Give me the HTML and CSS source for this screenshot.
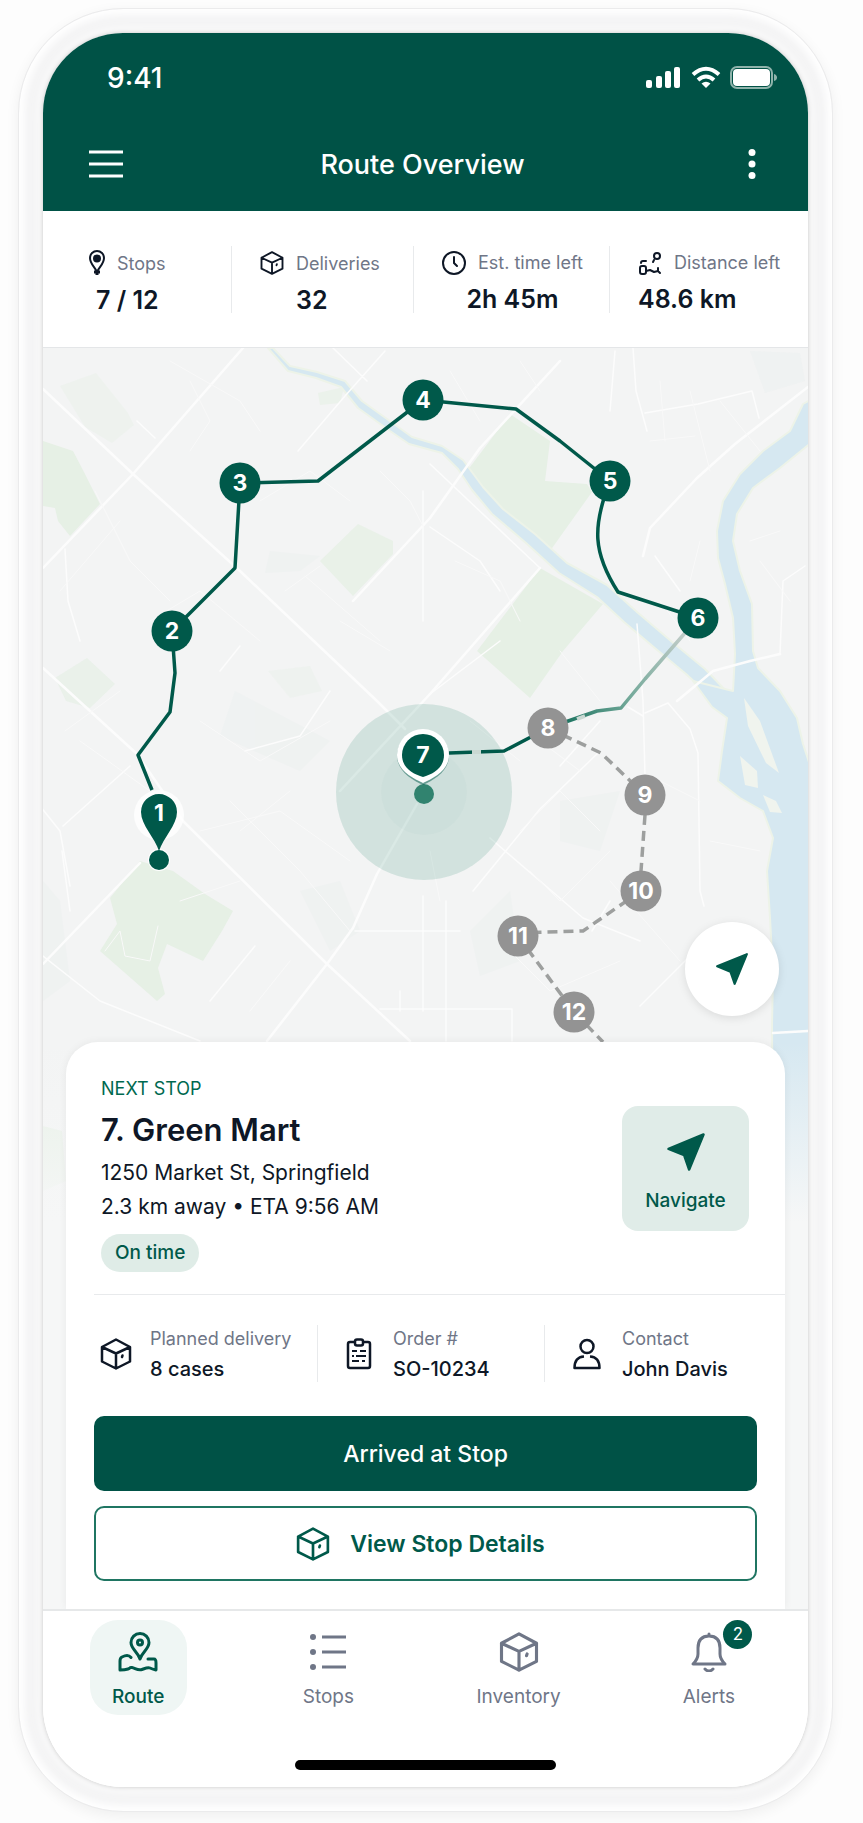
FILE: index.html
```html
<!DOCTYPE html>
<html lang="en">
<head>
    <meta charset="UTF-8">
    <meta name="viewport" content="width=device-width, initial-scale=1.0">
    <title>Route Overview</title>
    <link rel="stylesheet" href="styles.css">
</head>
<body>
    <!-- Shared icons -->
    <svg class="sprite" aria-hidden="true">
        <symbol id="icon-box" viewBox="0 0 32 32">
            <path d="M16 1.500 30 9V23.500L16 30.500 2 23.500V9ZM2 9 16 15.500 30 9M16 15.500V30.500"/>
            <path d="M22 19 22.500 17.500"/>
        </symbol>
        <symbol id="icon-arrow" viewBox="0 0 32 32">
            <path d="M30 2 18.500 30 14.500 18.500 2 13.500Z"/>
        </symbol>
    </svg>

    <div class="phone">
        <div class="screen">
            <header class="header">
                <div class="status-bar">
                    <span class="time">9:41</span>
                    <div class="status-icons">
                        <svg width="36" height="24" viewBox="0 0 36 24" fill="#fff">
                            <rect x="0" y="14" width="6" height="8" rx="2"/>
                            <rect x="10" y="10" width="6" height="12" rx="2"/>
                            <rect x="19" y="5" width="6" height="17" rx="2"/>
                            <rect x="28" y="1" width="6" height="21" rx="2"/>
                        </svg>
                        <svg width="30" height="24" viewBox="0 0 30 24" fill="none" stroke="#fff" stroke-width="4">
                            <path d="M2 8.500Q15-3 28 8.500M7 14Q15 7 23 14"/>
                            <path d="M15 22 10.500 17.500Q15 14 19.500 17.500Z" fill="#fff" stroke="none"/>
                        </svg>
                        <svg width="48" height="24" viewBox="0 0 48 24">
                            <rect x="1" y="1" width="41" height="21" rx="6" fill="none" stroke="#8fb3ab" stroke-width="2"/>
                            <rect x="3" y="3" width="37" height="17" rx="4" fill="#fff"/>
                            <path d="M44 8Q47 9 47 11.500T44 15Z" fill="#8fb3ab"/>
                        </svg>
                    </div>
                </div>
                <div class="app-bar">
                    <button class="icon-btn" aria-label="Menu">
                        <svg width="34" height="30" viewBox="0 0 34 30" stroke="#fff" stroke-width="3">
                            <path d="M0 3H34M0 15H34M0 27H34"/>
                        </svg>
                    </button>
                    <h1>Route Overview</h1>
                    <button class="icon-btn" aria-label="More options">
                        <svg width="8" height="30" viewBox="0 0 8 30" fill="#fff">
                            <circle cx="4" cy="3.500" r="3.500"/>
                            <circle cx="4" cy="15" r="3.500"/>
                            <circle cx="4" cy="26.500" r="3.500"/>
                        </svg>
                    </button>
                </div>
            </header>

            <section class="stats">
                <div class="stat">
                    <div class="stat-body center">
                        <div class="stat-label">
                            <svg width="16" height="26" viewBox="0 0 16 26" fill="none" stroke="#0e1726" stroke-width="2">
                                <path d="M8 22C6 17 1 14 1 8a7 7 0 0 1 14 0c0 6-5 9-7 14Z"/>
                                <circle cx="8" cy="8.500" r="3" fill="#0e1726"/>
                                <path d="M5 22h6M8 22v3" stroke-width="3"/>
                            </svg>
                            <span>Stops</span>
                        </div>
                        <strong>7 / 12</strong>
                    </div>
                </div>
                <div class="stat">
                    <div class="stat-body indent">
                        <div class="stat-label">
                            <svg width="24" height="26" class="line dark"><use href="#icon-box"/></svg>
                            <span>Deliveries</span>
                        </div>
                        <strong>32</strong>
                    </div>
                </div>
                <div class="stat">
                    <div class="stat-body center">
                        <div class="stat-label">
                            <svg width="24" height="24" viewBox="0 0 24 24" fill="none" stroke="#0e1726" stroke-width="2" stroke-linecap="round">
                                <circle cx="12" cy="12" r="11"/>
                                <path d="M12 6v6l3 3"/>
                            </svg>
                            <span>Est. time left</span>
                        </div>
                        <strong>2h 45m</strong>
                    </div>
                </div>
                <div class="stat">
                    <div class="stat-body">
                        <div class="stat-label">
                            <svg width="24" height="24" viewBox="0 0 24 24" fill="none" stroke="#0e1726" stroke-width="2" stroke-linecap="round" stroke-linejoin="round">
                                <circle cx="19" cy="5" r="3"/>
                                <path d="M16 9 15 11M3 12q0-2 2-2h3"/>
                                <rect x="2" y="15" width="6" height="8" rx="2"/>
                                <path d="M8 20l4-1 4 2 4-1v-3M20 20l2 2"/>
                            </svg>
                            <span>Distance left</span>
                        </div>
                        <strong>48.6 km</strong>
                    </div>
                </div>
            </section>

            <main class="content">
                <svg class="map" viewBox="43 347 765 1261" preserveAspectRatio="xMidYMin slice" role="img" aria-label="Map of the route">
                    <defs>
                        <linearGradient id="fade" x1="0" y1="0" x2="0" y2="1">
                            <stop offset="0" stop-color="#f6f7f7" stop-opacity="0"/>
                            <stop offset="1" stop-color="#f6f7f7"/>
                        </linearGradient>
                        <linearGradient id="leg" gradientUnits="userSpaceOnUse" x1="686" y1="632" x2="568" y2="722">
                            <stop offset="0" stop-color="#c3cdc9"/>
                            <stop offset="0.600" stop-color="#6fa797"/>
                            <stop offset="1" stop-color="#1f7562"/>
                        </linearGradient>
                    </defs>
                    <rect x="43" y="347" width="765" height="1261" fill="#f3f4f4"/>

                    <!-- Parks -->
                    <g fill="#e6f0e5">
                        <path d="M43 440 73 450 85 473 100 503 70 535 58 520 55 507 43 505Z"/>
                        <path d="M55 677 87 657 115 683 90 707 66 700Z" opacity=".7"/>
                        <path d="M60 385 96 372 128 412 134 424 112 442 85 426Z" opacity=".4"/>
                        <path d="M320 560 358 523 393 540V553L353 595Z" opacity=".8"/>
                        <path d="M510 413 550 440 545 480 587 483 592 491 550 550 493 510 467 470Z"/>
                        <path d="M540 567 603 603 563 650 530 697 477 650Z"/>
                        <path d="M140 860 173 870 205 893 233 910 222 930 203 960 167 943 158 967 165 993 157 1000 100 950 117 923 110 897Z"/>
                        <path d="M268 670 310 665 322 690 290 697Z" opacity=".3"/>
                        <path d="M318 392 344 386 340 402 320 404Z" opacity=".6"/>
                        <path d="M43 1125 62 1130 66 1180 43 1190Z"/>
                    </g>
                    <g fill="#e9efee" opacity=".35">
                        <path d="M235 690 330 740 300 770 220 735Z"/>
                        <path d="M300 890 340 880 360 930 330 950Z"/>
                        <path d="M470 930 510 890 520 960 480 975Z"/>
                        <path d="M560 800 620 790 600 850 560 840Z"/>
                        <path d="M43 880 60 900 70 980 43 1000Z"/>
                        <path d="M270 550 320 555 300 570 265 572Z"/>
                        <path d="M750 350 800 352 805 380 765 392Z"/>
                    </g>

                    <!-- Rivers -->
                    <g stroke="#edf3e8" stroke-width="2" fill="#d6e8f1" stroke-linejoin="round">
                        <path d="M273 347 290 365 317 371 345 380 362 400 394 423 412 436 442 445 463 459 483 486 503 508 535 533 567 562 607 584 637 611 671 640 705 668 730 694 712 697 686 673 656 648 624 621 597 596 559 572 526 542 492 513 472 489 458 468 442 452 409 443 390 430 358 407 341 386 316 377 288 370 268 347Z"/>
                        <path d="M812 398 803 403 790 430 763 450 740 473 723 500 717 530 718 557 725 583 733 617 735 653 733 690 693 680 712 706 727 717 722 750 718 780 740 797 763 810 773 837 767 870 770 917 773 973 772 1023 773 1240H812V770L803 743 797 717 780 690 758 667 753 650 752 603 740 570 733 540 737 513 753 487 780 467 812 441Z"/>
                    </g>
                    <g fill="#f0f4ee">
                        <path d="M744 697 760 720 779 772 766 762 748 725Z"/>
                        <path d="M740 755 757 770 758 787 745 784Z"/>
                        <path d="M763 794 776 800 782 812 770 811Z"/>
                    </g>

                    <!-- Roads -->
                    <g fill="none" stroke="#fcfcfc" stroke-linejoin="round" stroke-linecap="round">
                        <path stroke-width="2.500" d="M43 388 133 473 240 570 377 700 405 728M43 667 137 753 183 820 327 963 410 1040M243 347 133 473 43 567M43 963 140 862M267 1040 327 963 353 927 377 873 417 803M560 360 480 447 430 517 353 600M540 567 430 693 340 790M808 386 735 443 697 477 650 527 643 555M780 653 750 660 713 670 677 700M773 1032 808 1030"/>
                        <path stroke-width="1.500" d="M633 347 636 390 647 430M615 350 610 410M430 463 540 567M430 526 480 560 500 590M637 623 643 700 645 775M643 715 628 706M645 712 668 702 690 728 698 752 700 890 704 905M490 837 583 917 640 940M598 752 540 808 473 890M600 720 560 765M780 653 783 580 805 565M645 412 698 403 752 390 759 417M355 930H460M423 895V1010M400 990V1010M446 900V1040M380 1008H512V1040M65 548 68 600 80 640M62 850 70 910M40 805 60 830 70 885M63 825 130 765M43 955 100 1000 200 1040M210 1000 255 945M137 420 155 437M333 347 367 380M385 350 345 395 298 450M423 490V620M430 693 500 640M330 690 300 735 245 750M240 645 220 670M655 555 680 590M592 930 610 900M640 1005 690 955"/>
                        <path stroke-width="1" stroke="#f9f9f9" d="M170 360 240 400 260 430M190 380 210 420 190 450M95 490 130 560 170 600M120 520 60 590M150 620 200 590 260 640M260 500 310 470 350 500M285 590 320 565M305 575 380 640M380 470 410 500 423 525M340 620 390 650M65 730 120 690M80 740 150 790M200 720 260 760 330 720M230 800 300 870 350 930M200 830 280 810 350 860M180 900 240 880M240 830 290 790M250 1010 290 960M105 950 120 930 125 955 150 960 158 925M440 900 430 850M520 830 560 790 600 830M530 870 560 900 610 850M500 940 550 990 620 960M610 880 680 960M580 770 540 740M660 780 700 800M710 840 760 850M660 380 665 440M690 390 710 470M650 440 695 435M720 400 760 450M660 600 690 640M700 540 690 580M455 560 500 580 520 620M560 650 600 700M450 370 480 420M520 360 540 390M750 540 780 530M760 560 790 600M470 720 520 760"/>
                    </g>

                    <!-- Position halo -->
                    <circle cx="424" cy="791" r="88" fill="#0b7a5e" fill-opacity=".14"/>
                    <circle cx="424" cy="791" r="43" fill="#0b7a5e" fill-opacity=".02"/>

                    <!-- Planned legs -->
                    <g fill="none" stroke="#9d9f9e" stroke-width="3.500" stroke-dasharray="10 6">
                        <path d="M548 727 601 752 645 794M645 814 641 870M641 890 583 930 518 932M518 935 574 1011 603 1041"/>
                    </g>
                    <!-- Driven legs -->
                    <g fill="none" stroke="#00594a" stroke-width="3.500" stroke-linejoin="round">
                        <path d="M152 789 138 754 170 711 175 672 172 630 235 567 240 482 318 480 362 446 423 399 516 408 560 440 610 480C592 526 593 552 618 591L698 617"/>
                        <path stroke="url(#leg)" d="M698 617 645 678 621 707 597 710 548 727"/>
                        <path d="M548 727 504 750 449 752"/>
                    </g>
                    <path d="M472 751h9M577 718l8-3" stroke="#c9d8d2" stroke-width="4"/>

                    <!-- Stops -->
                    <g fill="#00594a">
                        <circle cx="172" cy="630" r="20.500"/>
                        <circle cx="240" cy="482" r="20.500"/>
                        <circle cx="423" cy="399" r="20.500"/>
                        <circle cx="610" cy="480" r="20.500"/>
                        <circle cx="698" cy="617" r="20.500"/>
                    </g>
                    <g fill="#939393">
                        <circle cx="548" cy="727" r="20.500"/>
                        <circle cx="645" cy="794" r="20.500"/>
                        <circle cx="641" cy="890" r="20.500"/>
                        <circle cx="518" cy="935" r="20.500"/>
                        <circle cx="574" cy="1011" r="20.500"/>
                    </g>
                    <circle cx="159" cy="814" r="25" fill="#fff" fill-opacity=".8"/>
                    <circle cx="159" cy="859" r="11" fill="#fff"/>
                    <circle cx="159" cy="859" r="10" fill="#00594a"/>
                    <path d="M159 850C155 837 141 824 141 811a18 18 0 0 1 36 0c0 13-14 26-18 39Z" fill="#00594a"/>
                    <circle cx="424" cy="793" r="10" fill="#31836f"/>
                    <path d="M423 784C412 779 397 770 397 755a26 26 0 0 1 52 0c0 15-15 24-26 29Z" fill="#00594a" fill-opacity=".5"/>
                    <path d="M423 782C412 777 397 769 397 754a26 26 0 0 1 52 0c0 15-15 23-26 28Z" fill="#fff"/>
                    <path d="M423 776C413 773 402 767 402 754a21 21 0 0 1 42 0c0 13-11 19-21 22Z" fill="#00594a"/>

                    <g class="map-numbers">
                        <text x="159" y="820">1</text>
                        <text x="172" y="638">2</text>
                        <text x="240" y="490">3</text>
                        <text x="423" y="407">4</text>
                        <text x="610" y="488">5</text>
                        <text x="698" y="625">6</text>
                        <text x="423" y="762">7</text>
                        <text x="548" y="735">8</text>
                        <text x="645" y="802">9</text>
                        <text x="641" y="898">10</text>
                        <text x="518" y="943">11</text>
                        <text x="574" y="1019">12</text>
                    </g>

                    <rect x="43" y="1041" width="765" height="180" fill="url(#fade)"/>
                    <rect x="43" y="1220" width="765" height="390" fill="#f6f7f7"/>
                </svg>

                <div class="map-area">
                    <button class="locate" aria-label="Centre map on my position">
                        <svg width="34" height="34" class="solid"><use href="#icon-arrow"/></svg>
                    </button>
                </div>

                <section class="card">
                    <div class="next-stop">
                        <div class="stop-info">
                            <span class="eyebrow">NEXT STOP</span>
                            <h2>7. Green Mart</h2>
                            <p>1250 Market St, Springfield</p>
                            <p>2.3 km away • ETA 9:56 AM</p>
                            <span class="pill">On time</span>
                        </div>
                        <button class="navigate">
                            <svg width="40" height="40" class="solid"><use href="#icon-arrow"/></svg>
                            <span>Navigate</span>
                        </button>
                    </div>

                    <div class="details">
                        <div class="detail">
                            <svg width="32" height="32" class="line dark"><use href="#icon-box"/></svg>
                            <div>
                                <span class="detail-label">Planned delivery</span>
                                <span class="detail-value">8 cases</span>
                            </div>
                        </div>
                        <div class="detail">
                            <svg width="26" height="32" viewBox="0 0 26 32" fill="none" stroke="#0e1726" stroke-width="2.500">
                                <rect x="2" y="4" width="22" height="26" rx="2"/>
                                <rect x="9" y="1.500" width="8" height="6" rx="2" fill="#fff"/>
                                <path d="M6 13h5M14 13h6M6 18h2M10 18h10M6 23h7M16 23h3" stroke-width="2"/>
                            </svg>
                            <div>
                                <span class="detail-label">Order #</span>
                                <span class="detail-value">SO-10234</span>
                            </div>
                        </div>
                        <div class="detail">
                            <svg width="28" height="32" viewBox="0 0 28 32" fill="none" stroke="#0e1726" stroke-width="2.500" stroke-linejoin="round">
                                <circle cx="14" cy="8.500" r="6.500"/>
                                <path d="M11 18.500C4 19 1.500 23 1.500 30H26.500C26.500 23 24 19 17 18.500"/>
                            </svg>
                            <div>
                                <span class="detail-label">Contact</span>
                                <span class="detail-value">John Davis</span>
                            </div>
                        </div>
                    </div>

                    <div class="actions">
                        <button class="btn primary">Arrived at Stop</button>
                        <button class="btn outline">
                            <svg width="34" height="34" class="line green"><use href="#icon-box"/></svg>
                            View Stop Details
                        </button>
                    </div>
                </section>
            </main>

            <footer class="footer">
                <nav class="tabs">
                    <a href="#" class="tab active">
                        <svg width="40" height="40" viewBox="0 0 40 40" fill="none" stroke="#00594a" stroke-width="3" stroke-linejoin="round" stroke-linecap="round">
                            <path d="M22 27C20 20 13 17 13 10.500a9 9 0 0 1 18 0C31 17 24 20 22 27Z"/>
                            <circle cx="22" cy="10.500" r="2.500"/>
                            <path d="M13 25.500C11 23 7 23.500 4 25Q2 26 2 29V38C6 38 7 38 10 37 13 36 11 35 14 35.500S20 39 24 37.500 30 35 32 36 38 38 38 38V31Q38 27 36 27H30"/>
                        </svg>
                        <span>Route</span>
                    </a>
                    <a href="#" class="tab">
                        <svg width="40" height="40" viewBox="0 0 40 40" stroke="#6f7687" stroke-width="3">
                            <path d="M14 5H38M14 20H38M14 35H38"/>
                            <g fill="#6f7687" stroke="none">
                                <circle cx="5" cy="5" r="3"/>
                                <circle cx="5" cy="20" r="3"/>
                                <circle cx="5" cy="35" r="3"/>
                            </g>
                        </svg>
                        <span>Stops</span>
                    </a>
                    <a href="#" class="tab">
                        <svg width="40" height="40" class="line gray"><use href="#icon-box"/></svg>
                        <span>Inventory</span>
                    </a>
                    <a href="#" class="tab">
                        <svg width="40" height="40" viewBox="0 0 40 40" fill="none" stroke="#6f7687" stroke-width="3" stroke-linejoin="round" stroke-linecap="round">
                            <path d="M20 2V4M20 4C12 4 9 9 9 16V22C9 26 7 29 4 32H36C33 29 31 26 31 22V16C31 9 28 4 20 4Z"/>
                            <path d="M16 37Q20 41 24 37"/>
                        </svg>
                        <span>Alerts</span>
                        <span class="badge">2</span>
                    </a>
                </nav>
                <div class="home-bar"></div>
            </footer>
        </div>
    </div>
</body>
</html>
```

FILE: styles.css
```css
* {
    margin: 0;
    padding: 0;
    box-sizing: border-box;
}

body {
    font-family: Inter, 'Liberation Sans', sans-serif;
    color: #0e1726;
    background-color: #fdfdfd;
    padding: 8px 30px 11px 18px;
}

button {
    font: inherit;
    color: inherit;
    background: none;
    border: none;
    cursor: pointer;
}

svg {
    display: block;
    flex-shrink: 0;
}

.sprite {
    position: absolute;
    width: 0;
    height: 0;
}

.line {
    fill: none;
    stroke-width: 2.5;
    stroke-linejoin: round;
    stroke-linecap: round;
}

.dark {
    stroke: #0e1726;
}

.green {
    stroke: #00594a;
}

.gray {
    stroke: #6f7687;
}

.solid {
    fill: #00594a;
    stroke: #00594a;
    stroke-width: 2;
    stroke-linejoin: round;
}

/* Phone frame */
.phone {
    padding: 24px;
    border-radius: 105px;
    background-color: #fbfbfb;
    border: 1px solid #ebebec;
    box-shadow: inset 0 0 8px 6px #fff, inset 0 0 20px 16px #f1f1f2, 0 4px 14px rgba(0, 0, 0, 0.06);
}

.screen {
    border-radius: 80px;
    overflow: hidden;
    background-color: #fff;
    box-shadow: 0 0 4px rgba(0, 0, 0, 0.2);
}

/* Header */
.header {
    color: #fff;
    background-color: #005246;
}

.status-bar {
    display: flex;
    justify-content: space-between;
    align-items: center;
    height: 86px;
    padding: 4px 30px 0 64px;
}

.time {
    font-size: 28px;
    font-weight: 500;
}

.status-icons {
    display: flex;
    align-items: center;
    gap: 9px;
}

.app-bar {
    display: flex;
    justify-content: space-between;
    align-items: center;
    height: 92px;
    padding: 0 52px 2px 46px;
}

.app-bar h1 {
    font-size: 27px;
    font-weight: 500;
}

.icon-btn {
    display: flex;
    width: 34px;
}

.icon-btn:last-child {
    justify-content: flex-end;
}

/* Stats */
.stats {
    display: grid;
    grid-template-columns: 189fr 182fr 196fr 198fr;
    padding: 35px 0 34px;
    border-bottom: 1px solid #e4e6e8;
}

.stat {
    display: flex;
    height: 67px;
    padding-left: 28px;
    border-right: 1px solid #e8eaec;
}

.stat:first-child {
    padding-left: 46px;
}

.stat:last-child {
    border-right: none;
}

.stat-body {
    display: flex;
    flex-direction: column;
    gap: 10px;
    padding-top: 4px;
}

.stat-body.center {
    align-items: center;
}

.stat-label {
    display: flex;
    align-items: center;
    gap: 12px;
    height: 26px;
    font-size: 18px;
    color: #6f7687;
    white-space: nowrap;
}

.stat strong {
    font-size: 25px;
    line-height: 28px;
    font-weight: 600;
    white-space: nowrap;
}

.indent strong {
    padding-left: 36px;
}

/* Map */
.content {
    position: relative;
    padding: 0 23px;
    overflow: hidden;
}

.map {
    position: absolute;
    top: 0;
    left: 0;
    width: 100%;
    height: 100%;
}

.map-numbers {
    fill: #fff;
    font-size: 23px;
    font-weight: 700;
    text-anchor: middle;
}

.map-area {
    display: flex;
    justify-content: flex-end;
    align-items: flex-end;
    height: 694px;
    padding: 0 6px 26px;
}

.locate {
    position: relative;
    display: flex;
    align-items: center;
    justify-content: center;
    width: 94px;
    height: 94px;
    border-radius: 50%;
    background-color: #fff;
    box-shadow: 0 2px 10px rgba(0, 0, 0, 0.1);
}

/* Stop card */
.card {
    position: relative;
    padding: 32px 28px 28px;
    border-radius: 32px 32px 0 0;
    background-color: #fff;
    box-shadow: 0 0 8px rgba(0, 0, 0, 0.06);
}

.next-stop {
    display: flex;
    justify-content: space-between;
    align-items: flex-start;
    margin-right: -28px;
    padding: 0 36px 22px 7px;
    border-bottom: 1px solid #e8eaec;
}

.eyebrow {
    display: block;
    font-size: 18px;
    line-height: 30px;
    color: #00694f;
}

.stop-info h2 {
    font-size: 31px;
    line-height: 52px;
    font-weight: 600;
}

.stop-info p {
    font-size: 21px;
    line-height: 34px;
}

.pill {
    display: inline-block;
    margin-top: 10px;
    padding: 0 14px;
    font-size: 19px;
    line-height: 38px;
    font-weight: 500;
    color: #00594a;
    background-color: #dfece7;
    border-radius: 19px;
}

.navigate {
    display: flex;
    flex-direction: column;
    align-items: center;
    gap: 16px;
    width: 127px;
    margin-top: 32px;
    padding: 26px 0 18px;
    font-size: 19px;
    line-height: 25px;
    font-weight: 500;
    color: #00594a;
    background-color: #e0ece8;
    border-radius: 16px;
}

.details {
    display: grid;
    grid-template-columns: 224fr 227fr 212fr;
    padding: 30px 0 34px;
}

.detail {
    display: flex;
    align-items: center;
    gap: 21px;
    height: 57px;
    padding-left: 28px;
    border-right: 1px solid #e8eaec;
    white-space: nowrap;
}

.detail:first-child {
    padding-left: 6px;
    gap: 18px;
}

.detail:last-child {
    border-right: none;
}

.detail span {
    display: block;
    line-height: 30px;
}

.detail-label {
    font-size: 18px;
    color: #6f7687;
}

.detail-value {
    font-size: 20px;
    font-weight: 500;
}

.actions {
    display: flex;
    flex-direction: column;
    gap: 15px;
}

.btn {
    display: flex;
    align-items: center;
    justify-content: center;
    gap: 20px;
    height: 75px;
    font-size: 23px;
    font-weight: 500;
    border-radius: 10px;
}

.btn.primary {
    color: #fff;
    background-color: #005246;
}

.btn.outline {
    padding-right: 10px;
    color: #00594a;
    border: 2px solid #1f7562;
    font-weight: 600;
}

/* Bottom tabs */
.footer {
    padding-bottom: 17px;
    border-top: 2px solid #e6e8e9;
    background-color: #fff;
}

.tabs {
    display: grid;
    grid-template-columns: repeat(4, 1fr);
    justify-items: center;
    padding: 9px 4px 0 0;
}

.tab {
    position: relative;
    display: flex;
    flex-direction: column;
    align-items: center;
    gap: 13px;
    min-width: 97px;
    padding: 12px 5px 6px;
    font-size: 19px;
    line-height: 24px;
    color: #6f7687;
    text-decoration: none;
    border-radius: 28px;
}

.tab.active {
    color: #00594a;
    font-weight: 500;
    background-color: #eff6f4;
}

.badge {
    position: absolute;
    top: 0;
    right: 5px;
    width: 29px;
    font-size: 17px;
    line-height: 29px;
    text-align: center;
    color: #fff;
    background-color: #00594a;
    border-radius: 50%;
}

.home-bar {
    width: 34%;
    height: 10px;
    margin: 45px auto 0;
    border-radius: 5px;
    background-color: #000;
}
```
